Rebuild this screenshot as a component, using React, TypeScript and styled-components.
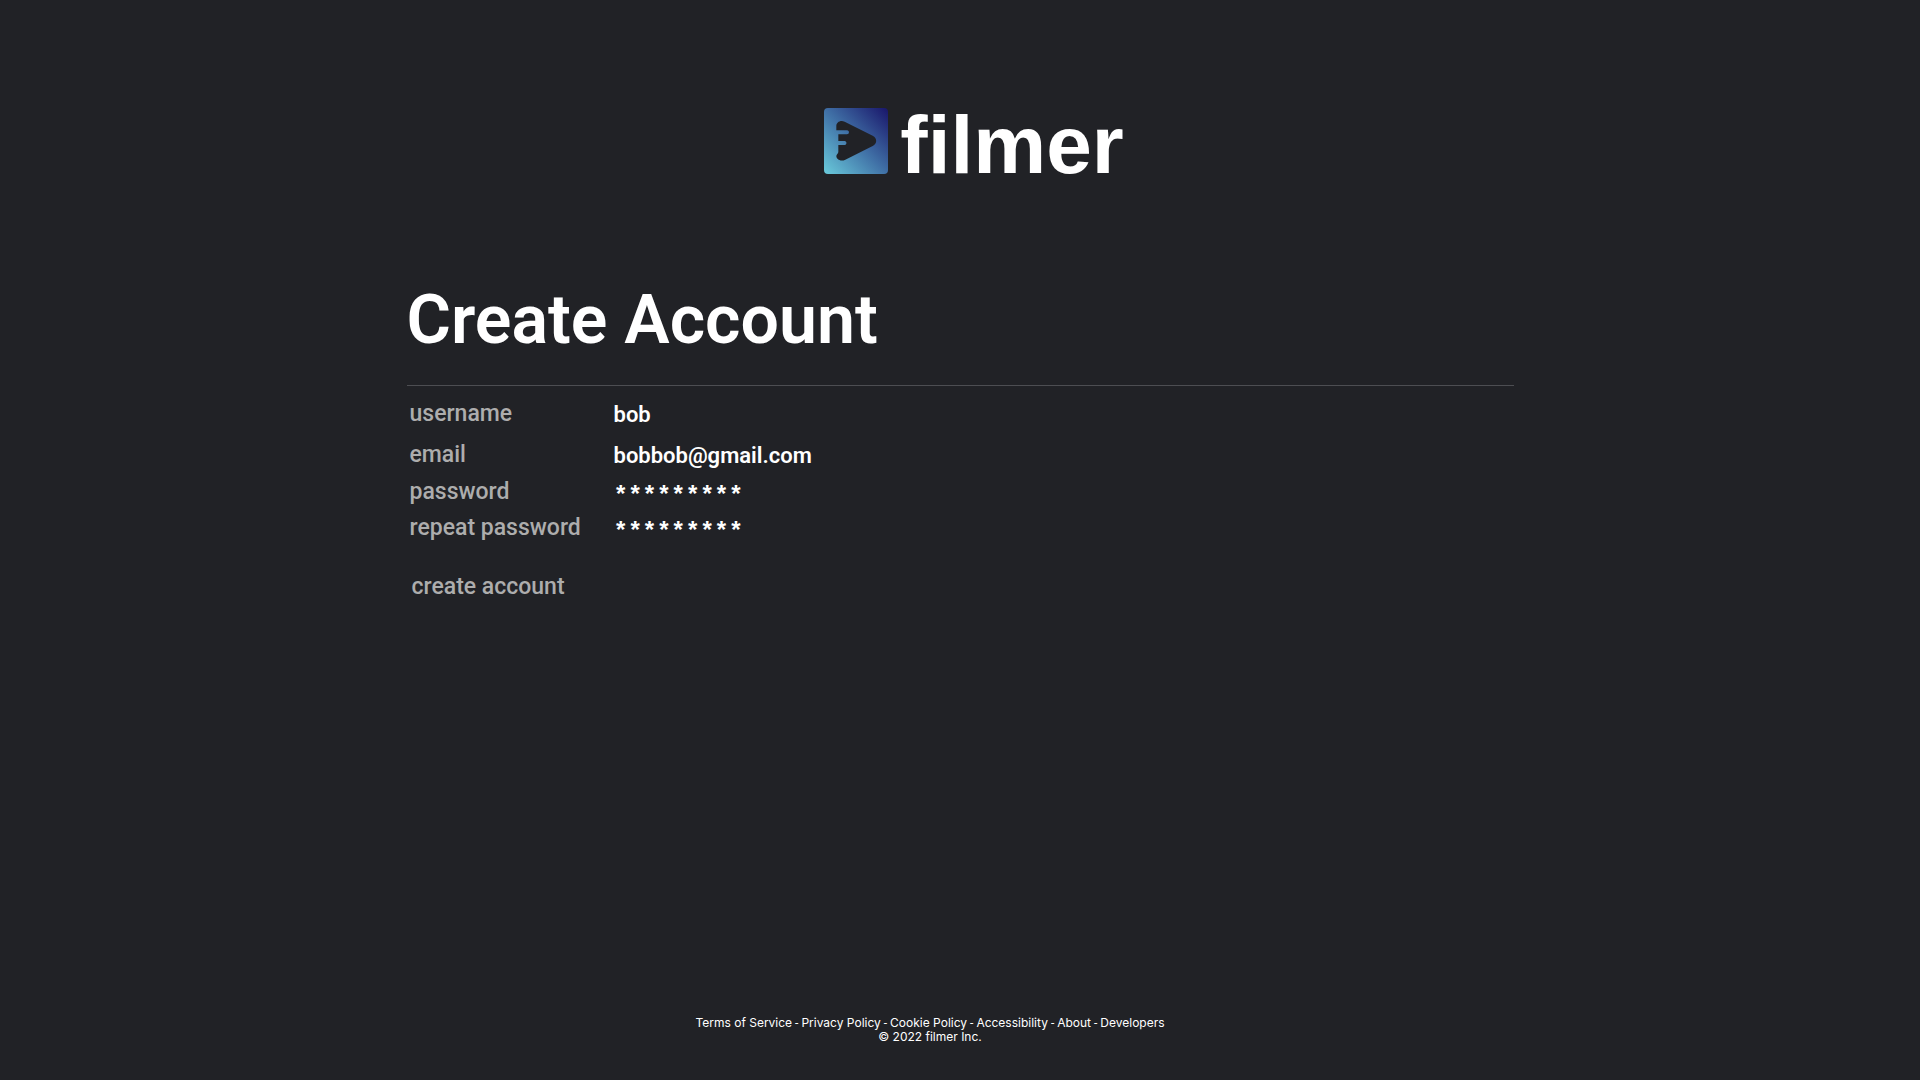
import React, { useState } from "react";
import styled, { createGlobalStyle } from "styled-components";

const GlobalStyle = createGlobalStyle`
  *, *::before, *::after {
    box-sizing: border-box;
  }
  body {
    margin: 0;
    background: #212226;
    color: #ffffff;
    font-family: Roboto, "Liberation Sans", sans-serif;
    font-weight: 500;
  }
`;

const Page = styled.div`
  display: flex;
  flex-direction: column;
  min-height: 100vh;
  padding: 87px 24px 36px;
`;

const Header = styled.header`
  display: flex;
  justify-content: center;
  align-items: center;
  gap: 12px;
  padding-left: 28px;
`;

const LogoMark = styled.svg`
  width: 64px;
  height: 66px;
`;

const LogoName = styled.span`
  padding-top: 8px;
  font-family: "Liberation Sans", Arial, sans-serif;
  font-size: 82px;
  line-height: 100px;
  font-weight: 700;
`;

const Main = styled.main`
  flex: 1;
  width: 100%;
  max-width: 1107px;
  margin: 0 auto;
  padding-top: 85px;
`;

const Title = styled.h1`
  margin: 0;
  padding-bottom: 25px;
  border-bottom: 1px solid #4d4e52;
  font-size: 68px;
  line-height: 80px;
  font-weight: 600;
`;

const Form = styled.form`
  padding: 10px 3px 0;
`;

const Row = styled.div<{ $height: number }>`
  display: grid;
  grid-template-columns: 204px 1fr;
  height: ${(p) => p.$height}px;
`;

const Label = styled.label`
  color: #adadad;
  font-size: 23px;
  line-height: 36px;
`;

const Field = styled.input<{ $masked?: boolean }>`
  height: 36px;
  min-width: 0;
  padding: ${(p) => (p.$masked ? "8px 0 0" : "0")};
  border: 0;
  outline: 0;
  background: transparent;
  color: #ffffff;
  font-family: ${(p) => (p.$masked ? '"Liberation Mono", monospace' : "inherit")};
  font-size: ${(p) => (p.$masked ? 24 : 22)}px;
  font-weight: ${(p) => (p.$masked ? 700 : 600)};
`;

const SubmitButton = styled.button`
  margin-top: 23px;
  padding: 0 2px;
  border: 0;
  background: transparent;
  color: #adadad;
  font: inherit;
  font-size: 23px;
  line-height: 36px;
  cursor: pointer;
`;

const Footer = styled.footer`
  padding-right: 60px;
  font-size: 12px;
  line-height: 14px;
  font-weight: 400;
  text-align: center;
`;

const FooterLink = styled.a`
  color: inherit;
  font-family: Inter, "Liberation Sans", sans-serif;
  text-decoration: none;
`;

const Copyright = styled.div`
  font-family: Inter, "Liberation Sans", sans-serif;
`;

const fields = [
  { id: "username", label: "username", value: "bob", height: 41 },
  { id: "email", label: "email", value: "bobbob@gmail.com", height: 37 },
  { id: "password", label: "password", value: "*********", height: 36, masked: true },
  { id: "repeat", label: "repeat password", value: "*********", height: 36, masked: true },
];

const links = [
  "Terms of Service",
  "Privacy Policy",
  "Cookie Policy",
  "Accessibility",
  "About",
  "Developers",
];

function Logo() {
  return (
    <LogoMark viewBox="0 0 192 198" aria-hidden="true">
      <defs>
        <linearGradient id="mark" x1="0" y1="1" x2="1" y2="0">
          <stop offset="0" stopColor="#6acbdb" />
          <stop offset="0.5" stopColor="#4070a6" />
          <stop offset="1" stopColor="#19156a" />
        </linearGradient>
      </defs>
      <rect width="192" height="198" rx="12" fill="url(#mark)" />
      <path
        fill="#212226"
        d="M37 67V54C37 43 49 35 62 41L146 83C160 90 160 107 146 114L64 155C49 162 37 153 37 144C37 139 43 137 43 132V111H62C69 111 69 99 62 99H43V79H69C77 79 77 67 69 67Z"
      />
    </LogoMark>
  );
}

export default function App() {
  const [values, setValues] = useState<Record<string, string>>(
    Object.fromEntries(fields.map((f) => [f.id, f.value]))
  );

  return (
    <Page>
      <GlobalStyle />
      <Header>
        <Logo />
        <LogoName>filmer</LogoName>
      </Header>
      <Main>
        <Title>Create Account</Title>
        <Form onSubmit={(e) => e.preventDefault()}>
          {fields.map((f) => (
            <Row key={f.id} $height={f.height}>
              <Label htmlFor={f.id}>{f.label}</Label>
              <Field
                id={f.id}
                type="text"
                spellCheck={false}
                autoComplete="off"
                $masked={f.masked}
                value={values[f.id]}
                onChange={(e) => setValues({ ...values, [f.id]: e.target.value })}
              />
            </Row>
          ))}
          <SubmitButton type="submit">create account</SubmitButton>
        </Form>
      </Main>
      <Footer>
        <nav>
          {links.map((name, i) => (
            <React.Fragment key={name}>
              {i > 0 && " - "}
              <FooterLink href="#">{name}</FooterLink>
            </React.Fragment>
          ))}
        </nav>
        <Copyright>© 2022 filmer Inc.</Copyright>
      </Footer>
    </Page>
  );
}
